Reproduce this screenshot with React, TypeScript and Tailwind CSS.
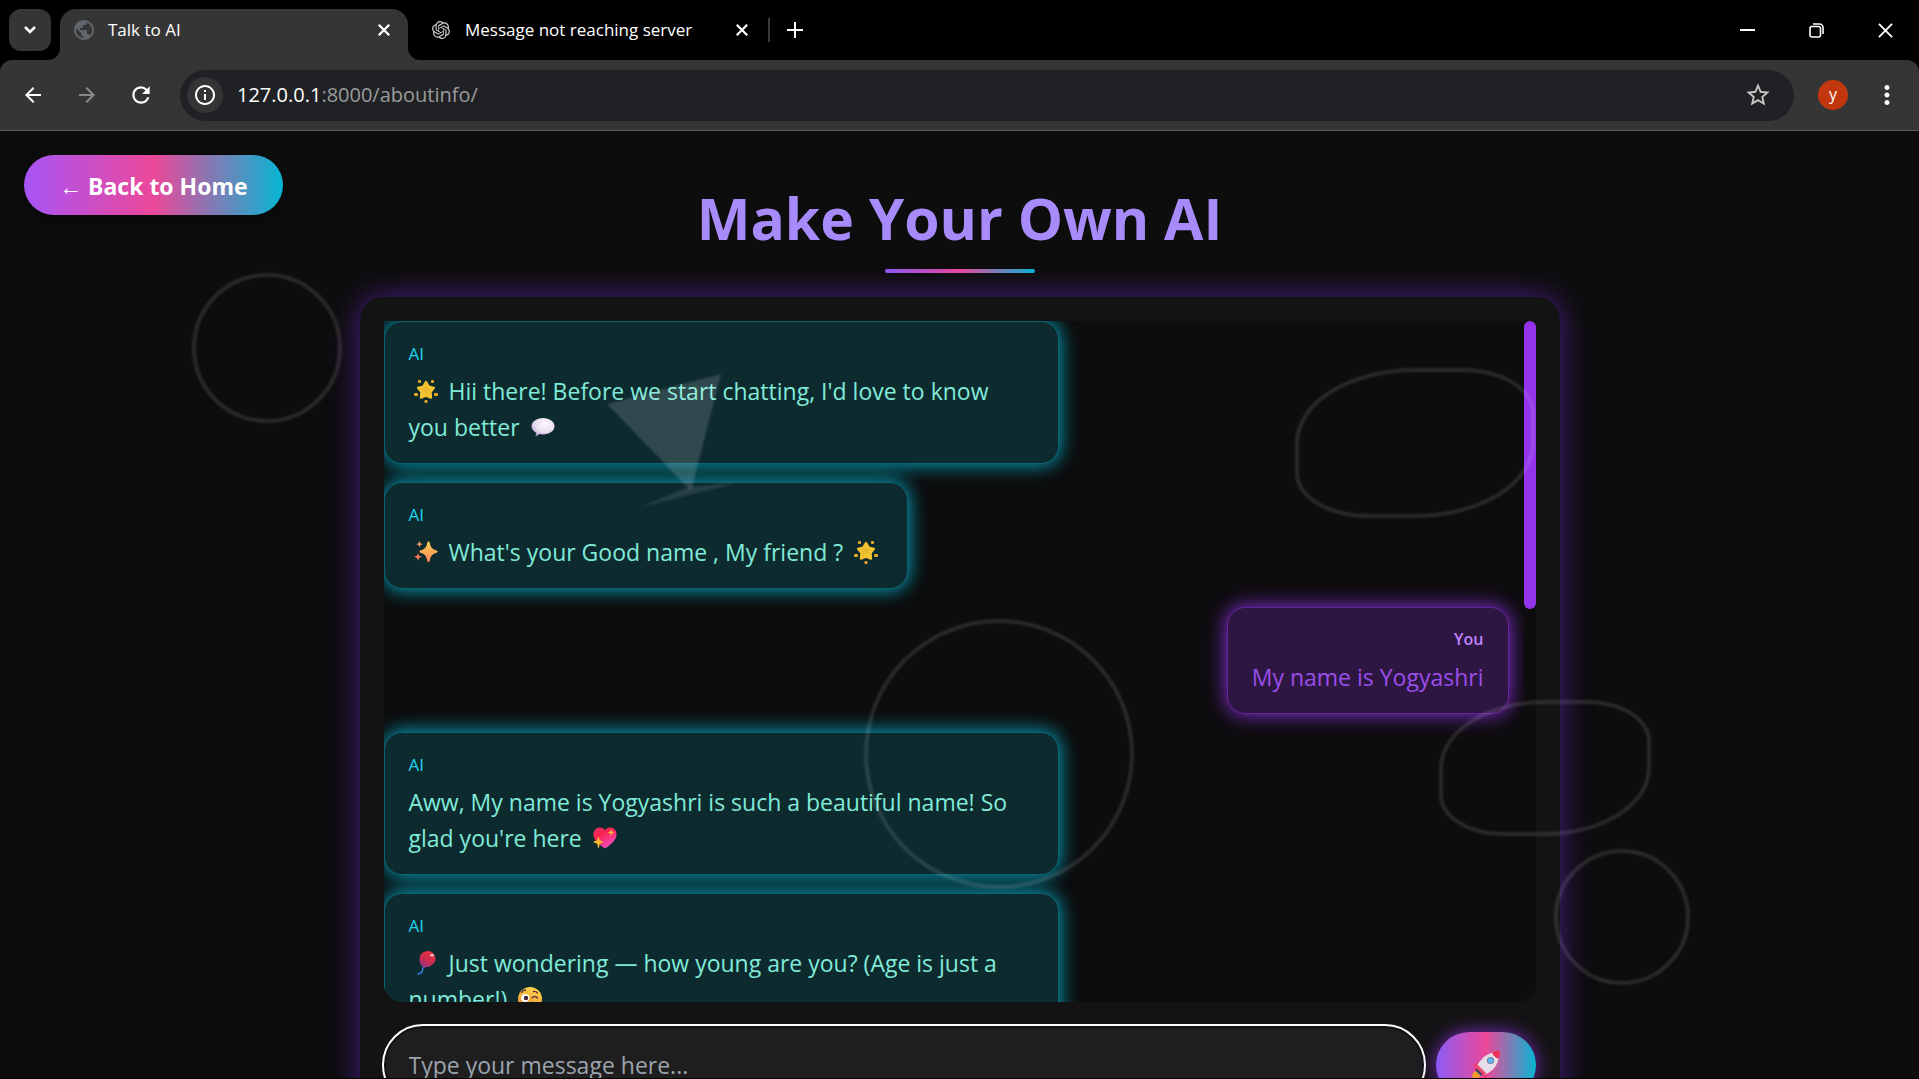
import type { ReactNode } from 'react';
import {
  MdArrowBack,
  MdArrowForward,
  MdInfoOutline,
  MdMoreVert,
  MdPublic,
  MdRefresh,
  MdStarBorder,
} from 'react-icons/md';
import { SiOpenai } from 'react-icons/si';

type EmojiProps = { label: string; children: ReactNode };

function Emoji({ label, children }: EmojiProps) {
  return (
    <svg
      role="img"
      aria-label={label}
      viewBox="0 0 24 24"
      className="mx-[5px] inline-block size-6 align-[-3px]"
    >
      {children}
    </svg>
  );
}

function GlowingStar() {
  return (
    <Emoji label="🌟">
      <defs>
        <radialGradient id="star-fill">
          <stop offset="0" stopColor="#e3b52f" />
          <stop offset="1" stopColor="#fbcb31" />
        </radialGradient>
      </defs>
      <path
        d="M12 3l2.7 4.6 5.2 1.2-3.4 4.2.5 5.6-5-2-5 2 .5-5.6L4.100 8.800l5.200-1.200z"
        fill="url(#star-fill)"
        stroke="#f3c22e"
        strokeWidth="2.400"
        strokeLinejoin="round"
      />
      <g fill="#e9a825">
        <rect x="4" y="1" width="3" height="3" rx="1" />
        <rect x="17" y="1" width="3" height="3" rx="1" />
        <rect x="0" y="14" width="4" height="3" rx="1" />
        <rect x="20" y="14" width="4" height="3" rx="1" />
        <rect x="10.500" y="21" width="3" height="3" rx="1" />
      </g>
    </Emoji>
  );
}

function SpeechBalloon() {
  return (
    <Emoji label="💬">
      <defs>
        <radialGradient id="balloon-fill" cx="0.6" cy="0.35" r="0.7">
          <stop offset="0" stopColor="#fdf8ff" />
          <stop offset="0.6" stopColor="#e9dff0" />
          <stop offset="1" stopColor="#bfa6d4" />
        </radialGradient>
      </defs>
      <path
        d="M12 3c6.400 0 11.500 3.600 11.500 8.300S18.400 19.500 12 19.500c-1.300 0-2.500-.1-3.600-.4C7.300 20.300 5.700 21 4.200 21c.8-.9 1.100-2 1-3.300C2.300 16.200.5 13.900.5 11.300.5 6.600 5.600 3 12 3z"
        fill="url(#balloon-fill)"
      />
    </Emoji>
  );
}

function Sparkles() {
  return (
    <Emoji label="✨">
      <defs>
        <linearGradient id="sparkle-fill" x1="0" y1="0" x2="0" y2="1">
          <stop offset="0" stopColor="#ffd04f" />
          <stop offset="1" stopColor="#ff8560" />
        </linearGradient>
      </defs>
      <path
        d="M14.500 1.500c.7 0 1 .5 1.200 1.200 1 4.600 2 6.200 7 7.800 1.300.5 1.300 1.700 0 2.200-5 1.600-6 3.200-7 8.400-.3 1.400-2 1.400-2.400 0-1-5.200-2-6.800-7-8.400-1.300-.5-1.300-1.700 0-2.200 5-1.600 6-3.200 7-7.800.2-.7.600-1.200 1.200-1.200z"
        fill="url(#sparkle-fill)"
      />
      <path d="M5.500 1l.9 2.300 2.400.9-2.400.9-.9 2.400-.9-2.400-2.300-.9 2.300-.9z" fill="#ff9b63" />
      <path d="M4 13l1 2.800 3 1-3 1.100L4 21l-1-3.100-3-1.100 3-1z" fill="#ff7a5c" />
    </Emoji>
  );
}

function SparklingHeart() {
  return (
    <Emoji label="💖">
      <defs>
        <linearGradient id="heart-fill" x1="0" y1="0" x2="0.6" y2="1">
          <stop offset="0" stopColor="#e63065" />
          <stop offset="0.4" stopColor="#fa2450" />
          <stop offset="1" stopColor="#f04fc4" />
        </linearGradient>
      </defs>
      <path
        d="M12 4.200C14 1 18 .8 20.600 2.600c3.200 2.200 3.800 6.700 1.800 10.100C20.300 16.400 16 19.800 12 22.500 8 19.800 3.700 16.400 1.600 12.700-.4 9.300.2 4.800 3.400 2.600 6 .8 10 1 12 4.200z"
        fill="url(#heart-fill)"
      />
      <path
        d="M5.500 11.500c.7 3.200 1 3.500 4.200 4.500-3.200 1-3.500 1.300-4.200 5.500-.7-4.200-1-4.500-4.700-5.500 3.700-1 4-1.300 4.700-4.500z"
        fill="#fdbb32"
        stroke="#fdbb32"
        strokeLinejoin="round"
      />
      <path d="M18 3l.9 2.600 2.600.9-2.600.9L18 10l-.9-2.600-2.600-.9 2.600-.9z" fill="#ffb63d" />
    </Emoji>
  );
}

function PartyBalloon() {
  return (
    <Emoji label="🎈">
      <defs>
        <linearGradient id="party-fill" x1="0.7" y1="0" x2="0.3" y2="1">
          <stop offset="0" stopColor="#ee3346" />
          <stop offset="0.6" stopColor="#c72b50" />
          <stop offset="1" stopColor="#8c3a9c" />
        </linearGradient>
      </defs>
      <path d="M9 16c0 3-.5 4.500-1.500 5.500S5 23 3.500 23" fill="none" stroke="#3187f0" strokeWidth="1.400" />
      <path
        d="M13.500 0C18 0 21.500 3.500 21.500 7.800c0 4.500-4.400 8.300-9.800 8.300l-2 1.200-1-1.800C6.500 14 5.500 11.200 5.500 8.400 5.500 3.700 9 0 13.500 0z"
        fill="url(#party-fill)"
      />
      <ellipse cx="18" cy="4.200" rx="1.800" ry="1.300" fill="#ffc2cd" />
    </Emoji>
  );
}

function WinkingFace() {
  return (
    <Emoji label="😜">
      <defs>
        <linearGradient id="wink-fill" x1="0.7" y1="0" x2="0.3" y2="1">
          <stop offset="0" stopColor="#ffd84a" />
          <stop offset="1" stopColor="#f08a30" />
        </linearGradient>
      </defs>
      <circle cx="12" cy="12" r="12" fill="url(#wink-fill)" />
      <circle cx="7.200" cy="11" r="4" fill="#fff" />
      <circle cx="8" cy="11" r="2.200" fill="#43273b" />
      <path
        d="M14 11c1.500-2 4-2 5.500 0M3.500 5.500C4.500 3.700 6 3 7.500 3M15.500 4.500c1.500-.3 3 .2 4 1.500"
        fill="none"
        stroke="#5a3140"
        strokeWidth="1.300"
        strokeLinecap="round"
      />
      <path d="M8 17h8v3a4 4 0 0 1-8 0z" fill="#e7355f" />
    </Emoji>
  );
}

function Rocket() {
  return (
    <svg viewBox="0 0 28 28" className="size-7" aria-hidden="true">
      <path d="M5 19l-4.500 3.500V28L6 27.500 9.500 24z" fill="#f59a2c" />
      <path d="M9.500 11.500C6 11 3 12.500 1 15.500l4 .5-3 4 8 1zM17 18.500c.5 3.500-1 6.500-4 8.500l-.5-4-3 1-1-5z" fill="#f5355f" />
      <path
        d="M22 1.500l4.500 4.500c0 7-5 13.500-13.500 18L4 16C8 8.500 14.500 2.500 22 1.500z"
        fill="#e6dde8"
      />
      <path d="M5.500 13.500C4 15.500 3.500 17 4 19.500l4.500 4.500c2.500.5 4 0 6-1.500z" fill="#e93a60" opacity=".85" />
      <path d="M4 18.500l5.500 5.500" stroke="#234a78" strokeWidth="2" />
      <path d="M20 1.800c2.500-1.600 5.500-2 7.600-1.500.4 2.500-.1 5-1.400 7.400-2.700-.9-5.200-3.300-6.200-5.900z" fill="#f52d50" />
      <circle cx="18.500" cy="9.500" r="3.600" fill="#6d7f9c" />
      <circle cx="18.500" cy="9.500" r="2.500" fill="#62b6fb" />
    </svg>
  );
}

function CloseGlyph({ className }: { className: string }) {
  return (
    <svg viewBox="0 0 16 16" className={className} fill="none" stroke="currentColor" aria-hidden="true">
      <path d="M1 1l14 14M15 1L1 15" />
    </svg>
  );
}

function BrowserBar() {
  return (
    <header className="shrink-0 bg-black text-white">
      <div className="flex h-[60px] items-center">
        <button
          aria-label="Search tabs"
          className="ml-[9px] flex size-[42px] items-center justify-center rounded-xl bg-[#353535]"
        >
          <svg viewBox="0 0 12 8" className="w-3" fill="none" stroke="currentColor" strokeWidth="2.500">
            <path d="M1 1l5 5 5-5" />
          </svg>
        </button>
        <div className="relative ml-[9px] flex h-[51px] w-[348px] items-center self-end rounded-t-2xl bg-[#353535] pr-[18px] pb-[9px] pl-3">
          <svg viewBox="0 0 12 12" className="absolute bottom-0 -left-3 size-3 fill-[#353535]" aria-hidden="true">
            <path d="M12 0v12H0A12 12 0 0 0 12 0z" />
          </svg>
          <svg viewBox="0 0 12 12" className="absolute -right-3 bottom-0 size-3 fill-[#353535]" aria-hidden="true">
            <path d="M0 0v12h12A12 12 0 0 1 0 0z" />
          </svg>
          <MdPublic className="size-6 text-[#60656b]" />
          <span className="ml-3 flex-1 text-[17px]">Talk to AI</span>
          <button aria-label="Close Talk to AI">
            <CloseGlyph className="size-3 stroke-3" />
          </button>
        </div>
        <div className="flex w-[344px] items-center pr-1 pl-6">
          <SiOpenai className="size-[18px] text-[#d0d0d0]" />
          <span className="ml-[15px] flex-1 text-[17px] whitespace-nowrap">Message not reaching server</span>
          <button aria-label="Close Message not reaching server">
            <CloseGlyph className="size-3 stroke-3" />
          </button>
        </div>
        <span className="ml-4 h-6 w-0.5 bg-[#3a3a3a]" />
        <button aria-label="New tab" className="ml-[17px]">
          <svg viewBox="0 0 16 16" className="size-4" stroke="currentColor" strokeWidth="2">
            <path d="M8 0v16M0 8h16" />
          </svg>
        </button>
        <div className="mr-[26px] ml-auto flex items-center gap-[54px]">
          <button aria-label="Minimize">
            <svg viewBox="0 0 15 15" className="size-[15px]" stroke="currentColor" strokeWidth="2">
              <path d="M0 7h15" />
            </svg>
          </button>
          <button aria-label="Restore">
            <svg viewBox="0 0 15 15" className="size-[15px]" fill="none" stroke="currentColor" strokeWidth="1.600">
              <rect x="1" y="3.500" width="10.500" height="10.500" rx="2" />
              <path d="M4 1h6.500A3.500 3.500 0 0 1 14 4.500V11" />
            </svg>
          </button>
          <button aria-label="Close window">
            <CloseGlyph className="size-[15px] stroke-2" />
          </button>
        </div>
      </div>
      <div className="flex h-[71px] items-center rounded-t-xl border-b border-[#5c5c5c] bg-[#353535] pr-[17px] pl-[21px]">
        <button aria-label="Back">
          <MdArrowBack className="size-6" />
        </button>
        <button aria-label="Forward" className="ml-[30px] text-[#8a8a8a]">
          <MdArrowForward className="size-6" />
        </button>
        <button aria-label="Reload" className="ml-[29px]">
          <MdRefresh className="size-[26px]" />
        </button>
        <div className="ml-[26px] flex h-[51px] flex-1 items-center rounded-full bg-[#202124] pr-[22px] pl-[7px]">
          <button
            aria-label="Site information"
            className="flex size-9 items-center justify-center rounded-full bg-[#333436]"
          >
            <MdInfoOutline className="size-6" />
          </button>
          <span className="ml-3.5 flex-1 text-xl text-[#9a9b9d]">
            <span className="text-white">127.0.0.1</span>:8000/aboutinfo/
          </span>
          <button aria-label="Bookmark this page" className="text-[#c7c7c7]">
            <MdStarBorder className="size-7" />
          </button>
        </div>
        <button
          aria-label="Profile"
          className="ml-6 flex size-[30px] items-center justify-center rounded-full bg-[#c2370d] pb-0.5 text-base leading-none"
        >
          y
        </button>
        <button aria-label="Menu" className="ml-6">
          <MdMoreVert className="size-[30px]" />
        </button>
      </div>
    </header>
  );
}

function AiMessage({ children }: { children: ReactNode }) {
  return (
    <article className="max-w-3/5 self-start rounded-[18px] border border-[#0b6472] bg-[#0d2a2f] px-6 py-[18px] text-[23px] leading-9 text-[#80ebd9] shadow-[0_0_18px_rgba(6,182,212,0.8),0_0_24px_rgba(6,182,212,0.3)]">
      <h2 className="mb-1.5 text-[17px] leading-[27px] text-[#22d3ee]">AI</h2>
      <p>{children}</p>
    </article>
  );
}

function UserMessage({ children }: { children: ReactNode }) {
  return (
    <article className="max-w-3/5 self-end rounded-[18px] border border-[#65249b] bg-[#2e1642] px-6 py-[18px] text-right text-[23px] leading-9 text-[#9a4eea] shadow-[0_0_18px_rgba(147,51,234,0.8),0_0_30px_rgba(147,51,234,0.3)]">
      <h2 className="mb-1.5 text-base leading-[27px] font-semibold text-[#c084fc]">You</h2>
      <p>{children}</p>
    </article>
  );
}

function FloatingShapes() {
  return (
    <div className="pointer-events-none absolute inset-0 overflow-hidden" aria-hidden="true">
      <div className="absolute top-[142px] left-[10%] size-[150px] rounded-full border-4 border-white/12 blur-[1px]" />
      <div className="absolute top-[237px] right-[20%] h-[150px] w-60 rounded-[50%_30%_50%_30%] border-4 border-white/12 blur-[1px]" />
      <div className="absolute top-[488px] left-[45%] size-[270px] rounded-full border-4 border-white/12 blur-[1px]" />
      <div className="absolute top-[569px] left-[75%] h-[136px] w-[212px] rounded-[50%_30%_50%_30%] border-4 border-white/12 blur-[1px]" />
      <div className="absolute top-[718px] left-[81%] size-[136px] rounded-full border-4 border-white/12 blur-[1px]" />
      <svg viewBox="0 0 150 150" className="absolute top-[239px] left-[31%] size-[150px] fill-white blur-[1px]">
        <path d="M12 34L126 4 96 121z" fillOpacity=".15" />
        <path d="M42 138L94 117 146 112 98 124z" fillOpacity=".1" />
      </svg>
    </div>
  );
}

export default function App() {
  return (
    <div className="flex h-screen flex-col overflow-hidden border-b border-black bg-[#0d0d0d] font-['Open_Sans',sans-serif]">
      <BrowserBar />
      <main className="relative min-h-0 flex-1 overflow-hidden">
        <a
          href="#home"
          className="absolute top-6 left-6 flex h-[60px] items-center rounded-full bg-[linear-gradient(90deg,#a855f7,#ec4899,#06b6d4)] px-[35px] pt-0.5 text-[23px] font-bold text-white shadow-[0_6px_18px_rgba(0,0,0,0.4)]"
        >
          ← Back to Home
        </a>
        <h1 className="pt-[47px] text-center text-[57px] leading-[80px] font-bold text-[#a78bfa]">
          Make Your Own AI
        </h1>
        <div className="mx-auto mt-[11px] h-1 w-[150px] rounded-full bg-[linear-gradient(90deg,#8b5cf6,#ec4899,#06b6d4)]" />
        <section className="mx-auto mt-6 max-w-[1200px] rounded-3xl bg-[#131313] p-6 shadow-[0_0_30px_rgba(124,45,236,0.56)]">
          <div className="flex h-[681px] overflow-hidden rounded-b-[18px] bg-[#0d0d0d]">
            <div className="flex min-w-0 flex-1 flex-col gap-[18px] overflow-hidden pr-[15px] *:shrink-0">
              <AiMessage>
                <GlowingStar /> Hii there! Before we start chatting, I'd love to know you&nbsp;better <SpeechBalloon />
              </AiMessage>
              <AiMessage>
                <Sparkles /> What's your Good name , My friend ? <GlowingStar />
              </AiMessage>
              <UserMessage>My name is Yogyashri</UserMessage>
              <AiMessage>
                Aww, My name is Yogyashri is such a beautiful name! So glad you're here <SparklingHeart />
              </AiMessage>
              <AiMessage>
                <PartyBalloon /> Just wondering — how young are you? (Age is just a number!) <WinkingFace />
              </AiMessage>
            </div>
            <div className="h-72 w-3 rounded-full bg-[#9333ea]" />
          </div>
          <form className="mt-6 flex items-center gap-3">
            <input
              aria-label="Message"
              placeholder="Type your message here..."
              className="h-[78px] min-w-0 flex-1 rounded-[39px] border-2 border-[#121212] bg-[#1e1e1e] px-[23px] text-[23px] text-white outline-2 outline-white placeholder:text-[#9ca3af]"
            />
            <button
              type="button"
              aria-label="Send message"
              className="flex h-[66px] w-[100px] items-center justify-center rounded-full bg-[linear-gradient(90deg,#8b5cf6,#ec4899,#06b6d4)] shadow-[0_0_18px_rgba(147,51,234,0.8)]"
            >
              <Rocket />
            </button>
          </form>
        </section>
        <FloatingShapes />
      </main>
    </div>
  );
}
